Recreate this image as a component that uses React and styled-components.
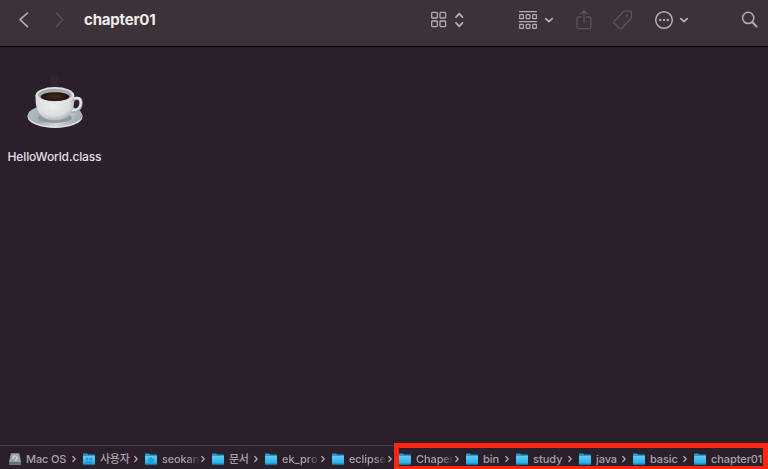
import React from 'react';
import styled, { createGlobalStyle } from 'styled-components';

const Global = createGlobalStyle`
  * { box-sizing: border-box; }
  body { margin: 0; background: #2b1f2b; overflow: hidden; }
`;

const Window = styled.div`
  position: relative;
  display: flex;
  flex-direction: column;
  width: 768px;
  height: 469px;
  background: #2b1f2b;
  color: #e4dfe3;
  font-family: Inter, "Noto Sans CJK KR", sans-serif;
`;

const Toolbar = styled.header`
  display: flex;
  align-items: center;
  height: 47px;
  padding: 0 0 7px 18px;
  background: #3d3239;
  border-bottom: 1px solid #000;
`;

const Icon = styled.svg`
  display: block;
  flex: none;
  width: ${(p) => p.$w}px;
  height: ${(p) => p.$h || p.$w}px;
  margin-left: ${(p) => p.$gap || 0}px;
  fill: none;
  stroke: ${(p) => (p.$dim ? '#5e525b' : '#b5adb3')};
  stroke-width: ${(p) => p.$stroke || 1.3};
  stroke-linecap: round;
  stroke-linejoin: round;
`;

const Title = styled.h1`
  flex: none;
  width: 346px;
  margin: 0 0 0 18px;
  color: #efebee;
  font-size: 15px;
  line-height: 20px;
  font-weight: 700;
  letter-spacing: -0.2px;
`;

const Content = styled.main`
  flex: 1;
  padding-top: 23px;
`;

const FileItem = styled.figure`
  display: flex;
  flex-direction: column;
  align-items: center;
  width: 109px;
  margin: 0;
`;

const FileName = styled.figcaption`
  margin-top: 15px;
  font-size: 12px;
  line-height: 16px;
  font-weight: 500;
  letter-spacing: -0.13px;
  white-space: nowrap;
`;

const Cup = styled.svg`
  display: block;
  width: 64px;
  height: 64px;
`;

const PathBar = styled.footer`
  display: flex;
  align-items: center;
  height: 24px;
  padding: 2px 0 0 9px;
  border-top: 1px solid #4a3f49;
  white-space: nowrap;
`;

const Crumb = styled.div`
  display: flex;
  flex: none;
  align-items: center;
`;

const CrumbLabel = styled.span`
  width: ${(p) => p.$w}px;
  margin-left: 5px;
  overflow: hidden;
  color: #aaa2a9;
  font-size: 11px;
  line-height: 16px;
  font-weight: 500;
  letter-spacing: ${(p) => p.$track || 0}px;
  mask-image: ${(p) => (p.$fade ? 'linear-gradient(90deg, #000 65%, transparent 98%)' : 'none')};
`;

const ChevronSlot = styled.span`
  width: 11px;
`;

const Highlight = styled.div`
  position: absolute;
  left: 394px;
  top: 443px;
  width: 374px;
  height: 26px;
  border: 5px solid #ff2611;
  border-bottom-width: 3px;
`;

const crumbs = [
  { label: 'Mac OS', width: 46, kind: 'disk', track: -0.15 },
  { label: '사용자', width: 34, kind: 'users', track: -0.3 },
  { label: 'seokan', width: 39, kind: 'home', fade: true, track: -0.15 },
  { label: '문서', width: 25, track: -0.4 },
  { label: 'ek_pro', width: 39, fade: true },
  { label: 'eclipse', width: 39, fade: true, track: -0.1 },
  { label: 'Chaper', width: 39, fade: true, track: -0.1 },
  { label: 'bin', width: 22 },
  { label: 'study', width: 35 },
  { label: 'java', width: 26, track: -0.1 },
  { label: 'basic', width: 33, track: -0.1 },
  { label: 'chapter01', width: 53, last: true, track: -0.08 },
];

function CrumbIcon({ kind }) {
  if (kind === 'disk') {
    return (
      <svg width="12" height="12" viewBox="0 0 12 12">
        <path d="M2 0.3h8.2L12 9v2.7H0V9z" fill="#98a5a5" />
        <path d="M0 9h12v2.7H0z" fill="#677071" />
        <circle cx="6" cy="5" r="2.7" fill="#c4d0d0" />
        <circle cx="6" cy="5" r="1" fill="#839090" />
        <path d="M3.2 8.3L5.4 6" stroke="#627070" />
      </svg>
    );
  }
  return (
    <svg width="12" height="12" viewBox="0 0 12 12">
      <path d="M0 1.5Q0 .6 .8.6h3.3l.9.9h6.2q.8 0 .8.8V5H0z" fill="#249bd0" />
      <path d="M0 3h12v7.6q0 .8-.8.8H.8q-.8 0-.8-.8z" fill="url(#folderFace)" />
      <path d="M0 11h12" stroke="#1688c0" strokeWidth=".8" />
      {kind === 'users' && (
        <g fill="none" stroke="#1683bd" strokeWidth=".9">
          <circle cx="4.2" cy="6" r=".8" />
          <circle cx="7.8" cy="6" r=".8" />
          <path d="M3 8.6q3 1.5 6 0" />
        </g>
      )}
      {kind === 'home' && <path d="M3.4 6.7L6 4.6l2.6 2.1M4.3 6.6v2.5h3.4V6.6" fill="#2b9dce" stroke="#248fbe" strokeWidth=".8" />}
    </svg>
  );
}

function CoffeeCup() {
  return (
    <Cup viewBox="23 70 64 64">
      <defs>
        <linearGradient id="folderFace" x1="0" y1="0" x2="0" y2="1">
          <stop stopColor="#5dcdf8" />
          <stop offset="1" stopColor="#22a5df" />
        </linearGradient>
        <linearGradient id="saucer" x1="0" y1="0" x2="1" y2="0.25">
          <stop stopColor="#b3c0c8" />
          <stop offset=".4" stopColor="#a3adb4" />
          <stop offset=".7" stopColor="#d5d9dc" />
          <stop offset="1" stopColor="#a9aeb3" />
        </linearGradient>
        <radialGradient id="porcelain" cx=".45" cy=".4" r=".65">
          <stop stopColor="#eeeeed" />
          <stop offset=".65" stopColor="#dbdcdd" />
          <stop offset="1" stopColor="#a5a9ac" />
        </radialGradient>
        <radialGradient id="coffee">
          <stop stopColor="#4a2d1c" />
          <stop offset="1" stopColor="#1c100d" />
        </radialGradient>
        <filter id="steam" filterUnits="userSpaceOnUse" x="40" y="66" width="32" height="30">
          <feGaussianBlur stdDeviation="1.3" />
        </filter>
      </defs>
      <path d="M53.5 88q-3-5 0-12M58 88q-3-4-1-10" fill="none" stroke="#796b77" strokeOpacity=".2" strokeWidth="1.8" filter="url(#steam)" />
      <ellipse cx="55" cy="116.7" rx="27.5" ry="11.2" fill="#e0e3e5" />
      <ellipse cx="55" cy="115.4" rx="27.3" ry="10.8" fill="url(#saucer)" />
      <ellipse cx="55" cy="118" rx="17" ry="5" fill="#8d979e" />
      <path d="M73 99.5c5-2.5 8.5-1 8 4.5-.5 5-3.5 7.5-10 7.5" fill="none" stroke="#aaafb2" strokeWidth="3.2" />
      <path d="M73 99c5-2.5 8-1 7.7 4-.4 4.6-3.4 7.4-8.7 7.4" fill="none" stroke="#e7e8e8" strokeWidth="2" />
      <path d="M35.5 95h38.8c.4 9-.6 16-6.3 21.4Q63.5 120.4 55 120.4t-13-4C36.2 111 35.3 104 35.5 95z" fill="url(#porcelain)" />
      <ellipse cx="54.9" cy="95.4" rx="19.4" ry="8.4" fill="#dfe1e2" />
      <ellipse cx="54.9" cy="95" rx="16.8" ry="6.2" fill="#a4abad" />
      <ellipse cx="55" cy="96.6" rx="14.3" ry="4.4" fill="url(#coffee)" />
      <path d="M40 100.4q15 5.2 30 0" fill="none" stroke="#ededed" strokeWidth="1" />
    </Cup>
  );
}

export default function App() {
  return (
    <Window>
      <Global />
      <Toolbar>
        <Icon $w={12} $h={18} $stroke={1.6} viewBox="0 0 12 18"><path d="M9.5 2L2 8.7l7.5 7" /></Icon>
        <Icon $w={12} $h={18} $gap={24} $dim viewBox="0 0 12 18"><path d="M2.5 2l6 6.7-6 7" /></Icon>
        <Title>chapter01</Title>
        <Icon $w={17} viewBox="0 0 17 17">
          <rect x="1.7" y="1.4" width="5.6" height="5.6" rx=".8" /><rect x="10" y="1.4" width="5.6" height="5.6" rx=".8" />
          <rect x="1.7" y="10" width="5.6" height="5.6" rx=".8" /><rect x="10" y="10" width="5.6" height="5.6" rx=".8" />
        </Icon>
        <Icon $w={10} $h={16} $gap={7} $stroke={1.8} viewBox="0 0 10 16"><path d="M2 5.2l3.2-3.5 3.2 3.5M2 10.8l3.2 3.5 3.2-3.5" /></Icon>
        <Icon $w={20} $gap={54} $stroke={1.25} viewBox="0 0 20 20">
          <path d="M1.5 1.5h17M1.5 11.5h17" />
          <rect x="1.7" y="4.6" width="3.7" height="4" rx=".6" /><rect x="8.2" y="4.6" width="3.7" height="4" rx=".6" /><rect x="14.7" y="4.6" width="3.7" height="4" rx=".6" />
          <rect x="1.7" y="14.4" width="3.7" height="4" rx=".6" /><rect x="8.2" y="14.4" width="3.7" height="4" rx=".6" /><rect x="14.7" y="14.4" width="3.7" height="4" rx=".6" />
        </Icon>
        <Icon $w={10} $gap={6} $stroke={1.8} viewBox="0 0 10 10"><path d="M1.8 3.7L5 6.6l3.2-2.9" /></Icon>
        <Icon $w={16} $h={20} $gap={22} $dim viewBox="0 0 16 20"><path d="M5 7H2.5Q1 7 1 8.5v8.7Q1 18.7 2.5 18.7h10.8q1.5 0 1.5-1.5V8.5Q14.8 7 13.3 7h-2.5M8 12V.9M4.9 3.8L8 .8l3.1 3" /></Icon>
        <Icon $w={20} $gap={21} $dim viewBox="0 0 20 20"><path d="M1.2 11.6L10.5 1.5q.7-.7 1.7-.7h4.3q2 0 2 2V7q0 1-.7 1.7l-9.2 9.8q-.9.9-1.8 0l-5.6-5.3q-.8-.8 0-1.6z" /><circle cx="14" cy="5.5" r=".6" /></Icon>
        <Icon $w={20} $gap={21} $stroke={1.5} viewBox="0 0 20 20"><circle cx="10" cy="10" r="8.3" /><g fill="#b5adb3" stroke="none"><circle cx="6.2" cy="10" r="1.2" /><circle cx="10" cy="10" r="1.2" /><circle cx="13.8" cy="10" r="1.2" /></g></Icon>
        <Icon $w={10} $gap={5} $stroke={1.8} viewBox="0 0 10 10"><path d="M1.8 3.7L5 6.6l3.2-2.9" /></Icon>
        <Icon $w={18} $gap={52} $stroke={1.5} viewBox="0 0 18 18"><circle cx="7.2" cy="6.9" r="5.6" /><path d="M11.4 11.2l4.2 4.4" strokeWidth="2" /></Icon>
      </Toolbar>
      <Content>
        <FileItem>
          <CoffeeCup />
          <FileName>HelloWorld.class</FileName>
        </FileItem>
      </Content>
      <PathBar>
        {crumbs.map((c) => (
          <Crumb key={c.label}>
            <CrumbIcon kind={c.kind} />
            <CrumbLabel $w={c.width} $fade={c.fade} $track={c.track}>{c.label}</CrumbLabel>
            {!c.last && (
              <ChevronSlot>
                <Icon $w={4} $h={8} $stroke={1.2} viewBox="0 0 4 8"><path d="M.8 1.5L3.2 4 .8 6.5" /></Icon>
              </ChevronSlot>
            )}
          </Crumb>
        ))}
      </PathBar>
      <Highlight />
    </Window>
  );
}
